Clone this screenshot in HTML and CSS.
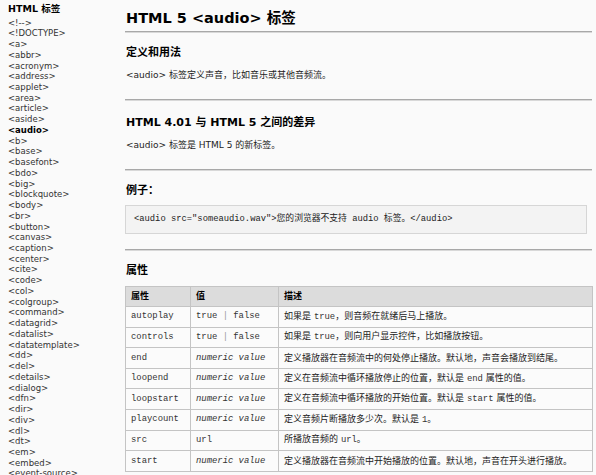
FILE: index.html
```html
<!DOCTYPE html>
<html lang="zh-CN">
<head>
<meta charset="utf-8">
<title>HTML 5 audio 标签</title>
<link rel="stylesheet" href="styles.css">
</head>
<body>
<div class="page">
  <nav class="side">
    <div class="side-title">HTML 标签</div>
    <ul class="side-list">
      <li>&lt;!--&gt;</li>
      <li>&lt;!DOCTYPE&gt;</li>
      <li>&lt;a&gt;</li>
      <li>&lt;abbr&gt;</li>
      <li>&lt;acronym&gt;</li>
      <li>&lt;address&gt;</li>
      <li>&lt;applet&gt;</li>
      <li>&lt;area&gt;</li>
      <li>&lt;article&gt;</li>
      <li>&lt;aside&gt;</li>
      <li class="current">&lt;audio&gt;</li>
      <li>&lt;b&gt;</li>
      <li>&lt;base&gt;</li>
      <li>&lt;basefont&gt;</li>
      <li>&lt;bdo&gt;</li>
      <li>&lt;big&gt;</li>
      <li>&lt;blockquote&gt;</li>
      <li>&lt;body&gt;</li>
      <li>&lt;br&gt;</li>
      <li>&lt;button&gt;</li>
      <li>&lt;canvas&gt;</li>
      <li>&lt;caption&gt;</li>
      <li>&lt;center&gt;</li>
      <li>&lt;cite&gt;</li>
      <li>&lt;code&gt;</li>
      <li>&lt;col&gt;</li>
      <li>&lt;colgroup&gt;</li>
      <li>&lt;command&gt;</li>
      <li>&lt;datagrid&gt;</li>
      <li>&lt;datalist&gt;</li>
      <li>&lt;datatemplate&gt;</li>
      <li>&lt;dd&gt;</li>
      <li>&lt;del&gt;</li>
      <li>&lt;details&gt;</li>
      <li>&lt;dialog&gt;</li>
      <li>&lt;dfn&gt;</li>
      <li>&lt;dir&gt;</li>
      <li>&lt;div&gt;</li>
      <li>&lt;dl&gt;</li>
      <li>&lt;dt&gt;</li>
      <li>&lt;em&gt;</li>
      <li>&lt;embed&gt;</li>
      <li>&lt;event-source&gt;</li>
    </ul>
  </nav>
  <main class="main">
    <h1 class="title">HTML 5 &lt;audio&gt; 标签</h1>
    <hr class="rule rule-title">

    <h2 class="sub sub-1">定义和用法</h2>
    <p class="text">&lt;audio&gt; 标签定义声音，比如音乐或其他音频流。</p>
    <hr class="rule">

    <h2 class="sub sub-2">HTML 4.01 与 HTML 5 之间的差异</h2>
    <p class="text">&lt;audio&gt; 标签是 HTML 5 的新标签。</p>
    <hr class="rule">

    <h2 class="sub sub-3">例子：</h2>
    <div class="code">&lt;audio src="someaudio.wav"&gt;您的浏览器不支持 audio 标签。&lt;/audio&gt;</div>
    <hr class="rule rule-code">

    <h2 class="sub sub-4">属性</h2>
    <table class="attrs">
      <colgroup>
        <col class="c1"><col class="c2"><col class="c3">
      </colgroup>
      <thead>
        <tr><th>属性</th><th>值</th><th>描述</th></tr>
      </thead>
      <tbody>
        <tr><td class="mono">autoplay</td><td class="mono">true <span class="bar">|</span> false</td><td>如果是 <span class="mono">true</span>，则音频在就绪后马上播放。</td></tr>
        <tr><td class="mono">controls</td><td class="mono">true <span class="bar">|</span> false</td><td>如果是 <span class="mono">true</span>，则向用户显示控件，比如播放按钮。</td></tr>
        <tr><td class="mono">end</td><td class="mono"><i>numeric value</i></td><td>定义播放器在音频流中的何处停止播放。默认地，声音会播放到结尾。</td></tr>
        <tr><td class="mono">loopend</td><td class="mono"><i>numeric value</i></td><td>定义在音频流中循环播放停止的位置，默认是 <span class="mono">end</span> 属性的值。</td></tr>
        <tr><td class="mono">loopstart</td><td class="mono"><i>numeric value</i></td><td>定义在音频流中循环播放的开始位置。默认是 <span class="mono">start</span> 属性的值。</td></tr>
        <tr><td class="mono">playcount</td><td class="mono"><i>numeric value</i></td><td>定义音频片断播放多少次。默认是 <span class="mono">1</span>。</td></tr>
        <tr><td class="mono">src</td><td class="mono">url</td><td>所播放音频的 <span class="mono">url</span>。</td></tr>
        <tr><td class="mono">start</td><td class="mono"><i>numeric value</i></td><td>定义播放器在音频流中开始播放的位置。默认地，声音在开头进行播放。</td></tr>
      </tbody>
    </table>
  </main>
</div>
</body>
</html>
```

FILE: styles.css
```css
html, body {
  margin: 0;
  padding: 0;
  background: #fafafa;
  height: 475px;
  overflow: hidden;
}

body {
  font-family: "DejaVu Sans", "Noto Sans CJK SC", sans-serif;
  color: #111;
}

.page {
  display: flex;
  align-items: flex-start;
}

/* ---------- sidebar ---------- */
.side {
  width: 117px;
  padding-left: 8px;
  flex: none;
}

.side-title {
  font-weight: bold;
  font-size: 9.5px;
  line-height: 12px;
  padding-top: 3px;
  color: #000;
}

.side-list {
  list-style: none;
  margin: 2.6px 0 0;
  padding: 0;
  font-size: 8.5px;
  line-height: 10.74px;
  color: #333;
  white-space: nowrap;
}

.side-list .current {
  font-weight: bold;
  color: #000;
}

/* ---------- main ---------- */
.main {
  width: 467px;
  flex: none;
}

.title {
  margin: 0;
  padding: 8px 0 0 1px;
  font-size: 14.5px;
  line-height: 20px;
  font-weight: bold;
  color: #000;
}

.rule {
  margin: 16.5px 0 0;
  height: 0;
  border: 0;
  border-top: 1px solid #a8a8a8;
  border-bottom: 1px solid #d8d8d8;
}

.rule-title {
  margin-top: 3px;
}

.rule-code {
  margin-top: 15px;
}

.sub {
  margin: 13px 0 0;
  padding-left: 1px;
  font-size: 11px;
  line-height: 15px;
  font-weight: bold;
  color: #000;
}

.sub-1 { margin-top: 12px; }
.sub-2 { margin-top: 14.5px; }
.sub-3 { margin-top: 12.5px; }
.sub-4 { margin-top: 12px; }

.text {
  margin: 9px 0 0;
  padding-left: 1px;
  font-size: 9px;
  line-height: 13px;
  color: #222;
}

.code {
  margin: 6.5px 5px 0 0;
  padding: 7px 8px;
  background: #f3f3f3;
  border: 1px solid #d6d6d6;
  font-family: "Liberation Mono", "Noto Sans CJK SC", monospace;
  font-size: 8.8px;
  line-height: 13px;
  color: #222;
}

/* ---------- table ---------- */
.attrs {
  margin-top: 8px;
  width: 467px;
  border-collapse: collapse;
  table-layout: fixed;
  font-size: 9px;
  color: #222;
}

.attrs .c1 { width: 65px; }
.attrs .c2 { width: 88px; }
.attrs .c3 { width: 314px; }

.attrs tr {
  height: 20.6px;
}

.attrs th,
.attrs td {
  border: 1px solid #c4c4c4;
  padding: 0 4px 0 5px;
  line-height: 11px;
  vertical-align: middle;
  text-align: left;
  white-space: nowrap;
  overflow: hidden;
}

.attrs th {
  background: #dcdcdc;
  font-weight: bold;
  color: #000;
}

.attrs td {
  background: #fbfbfb;
}

.attrs .mono {
  line-height: 11px;
}

.mono {
  font-family: "Liberation Mono", "Noto Sans CJK SC", monospace;
  font-size: 8.9px;
  color: #333;
}

.bar {
  color: #999;
}
```
